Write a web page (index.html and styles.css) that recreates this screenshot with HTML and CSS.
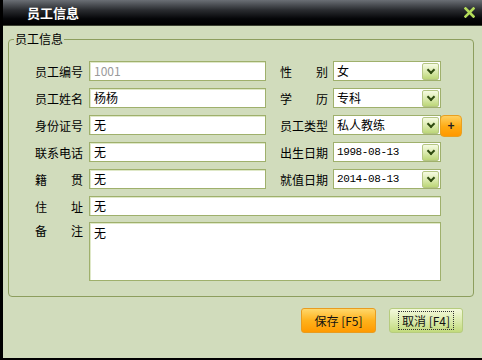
FILE: index.html
```html
<!DOCTYPE html>
<html lang="zh-CN">
<head>
  <meta charset="UTF-8">
  <title>员工信息</title>
  <link rel="stylesheet" href="styles.css">
</head>
<body>
  <div class="window">
    <div class="titlebar">
      <span class="title">员工信息</span>
      <span class="close">
        <svg width="11" height="11" viewBox="0 0 11 11"><path d="M1.5 1.5 L9.5 9.5 M9.5 1.5 L1.5 9.5" stroke="#b4dc5a" stroke-width="2.6" stroke-linecap="square"/></svg>
      </span>
    </div>
    <div class="content">
      <fieldset class="group">
        <legend>员工信息</legend>
        <div class="rows">
          <div class="row">
            <label class="lbl">员工编号</label>
            <div class="field disabled">1001</div>
            <label class="lbl lbl-right">性别</label>
            <div class="combo"><span class="combo-text">女</span><span class="drop"></span></div>
          </div>
          <div class="row">
            <label class="lbl">员工姓名</label>
            <div class="field">杨杨</div>
            <label class="lbl lbl-right">学历</label>
            <div class="combo"><span class="combo-text">专科</span><span class="drop"></span></div>
          </div>
          <div class="row">
            <label class="lbl">身份证号</label>
            <div class="field">无</div>
            <label class="lbl lbl-right">员工类型</label>
            <div class="combo"><span class="combo-text">私人教练</span><span class="drop"></span></div>
            <button class="add">+</button>
          </div>
          <div class="row">
            <label class="lbl">联系电话</label>
            <div class="field">无</div>
            <label class="lbl lbl-right">出生日期</label>
            <div class="combo"><span class="combo-text date">1998-08-13</span><span class="drop"></span></div>
          </div>
          <div class="row">
            <label class="lbl">籍贯</label>
            <div class="field">无</div>
            <label class="lbl lbl-right">就值日期</label>
            <div class="combo"><span class="combo-text date">2014-08-13</span><span class="drop"></span></div>
          </div>
          <div class="row">
            <label class="lbl">住址</label>
            <div class="field wide">无</div>
          </div>
          <div class="row row-top">
            <label class="lbl">备注</label>
            <div class="field wide memo">无</div>
          </div>
        </div>
      </fieldset>
      <div class="actions">
        <button class="btn btn-save">保存 [F5]</button>
        <button class="btn btn-cancel"><span class="focus">取消 [F4]</span></button>
      </div>
    </div>
  </div>
</body>
</html>
```

FILE: styles.css
```css
body {
    margin: 0;
    font-family: "Noto Sans CJK SC", "Liberation Sans", sans-serif;
    font-size: 12px;
    color: #000;
}
.window {
    width: 482px;
    height: 360px;
    box-sizing: border-box;
    border-left: 3px solid #000;
    border-bottom: 2px solid #000;
    background: #d1dcbc;
    display: flex;
    flex-direction: column;
}
.titlebar {
    height: 26px;
    flex: none;
    display: flex;
    align-items: center;
    justify-content: space-between;
    padding: 0 7px 0 24px;
    background: linear-gradient(to bottom, #6b6f75 0%, #2a2c30 40%, #050608 75%, #000 100%);
    border-bottom: 1px solid #3a3f30;
    box-sizing: border-box;
}
.title {
    color: #fff;
    font-size: 13px;
    font-weight: bold;
}
.close {
    display: flex;
    margin-top: -1px;
}
.content {
    flex: 1;
    display: flex;
    flex-direction: column;
}
.group {
    margin: 5px 8px 0 5px;
    padding: 0 0 15px 5px;
    border: 1px solid #8d9e5e;
    border-radius: 4px;
}
.group legend {
    padding: 0 1px;
    font-size: 12px;
    line-height: 16px;
}
.rows {
    margin: 14px 0 0 21px;
    display: flex;
    flex-direction: column;
    gap: 7px;
}
.row {
    display: flex;
    align-items: center;
    height: 20px;
}
.row-top {
    align-items: flex-start;
    height: auto;
    margin-top: -1px;
}
.lbl {
    width: 48px;
    flex: none;
    margin-right: 6px;
    text-align: justify;
    text-align-last: justify;
    white-space: nowrap;
}
.row-top .lbl {
    line-height: 18px;
}
.lbl-right {
    margin-left: 14px;
    margin-right: 5px;
}
.field {
    width: 177px;
    height: 20px;
    flex: none;
    box-sizing: border-box;
    border: 1px solid #9fb06c;
    box-shadow: inset 1px 1px 0 #dfe8c8;
    background: #fff;
    padding: 0 4px;
    line-height: 18px;
}
.field.disabled {
    color: #9a9a9a;
}
.field.wide {
    width: 352px;
}
.field.memo {
    height: 59px;
    padding-top: 1px;
}
.combo {
    width: 108px;
    height: 20px;
    flex: none;
    box-sizing: border-box;
    border: 1px solid #9fb06c;
    background: #fff;
    display: flex;
    align-items: center;
    justify-content: space-between;
    padding-left: 3px;
}
.combo-text {
    line-height: 18px;
}
.combo-text.date {
    font-family: "Liberation Mono", "Noto Sans CJK SC", monospace;
    font-size: 11px;
    letter-spacing: -0.4px;
}
.drop {
    width: 17px;
    height: 17px;
    margin-right: 1px;
    box-sizing: border-box;
    border: 1px solid #b5c684;
    border-radius: 2px;
    background: linear-gradient(to bottom, #f6fbe2 0%, #dcebb0 50%, #bcd678 100%);
    position: relative;
}
.drop::after {
    content: "";
    position: absolute;
    left: 5px;
    top: 3px;
    width: 4px;
    height: 4px;
    border-right: 2px solid #2f4a10;
    border-bottom: 2px solid #2f4a10;
    transform: rotate(45deg);
}
.add {
    width: 22px;
    height: 22px;
    align-self: flex-start;
    margin-left: -1px;
    padding: 0;
    border: 1px solid #e9a020;
    border-radius: 4px;
    background: linear-gradient(to bottom, #ffd060 0%, #ffaa10 55%, #ff9800 100%);
    font-family: "Liberation Sans", sans-serif;
    font-size: 12px;
    font-weight: bold;
    color: #222;
    line-height: 16px;
}
.actions {
    display: flex;
    justify-content: flex-end;
    gap: 13px;
    margin: 11px 19px 0 0;
}
.btn {
    height: 25px;
    padding: 0;
    font-family: "Noto Sans CJK SC", sans-serif;
    font-size: 12px;
    color: #111;
    border-radius: 3px;
    display: flex;
    align-items: center;
    justify-content: center;
}
.btn-save {
    width: 75px;
    border: 1px solid #e89c20;
    background: linear-gradient(to bottom, #ffd76a 0%, #ffb21c 50%, #ff9a00 100%);
}
.btn-cancel {
    width: 74px;
    border: 1px solid #b6cc7e;
    background: linear-gradient(to bottom, #f4f9dc 0%, #dcebae 50%, #c2da7c 100%);
}
.focus {
    border: 1px dotted #333;
    padding: 1px 3px;
    line-height: 15px;
}
```
